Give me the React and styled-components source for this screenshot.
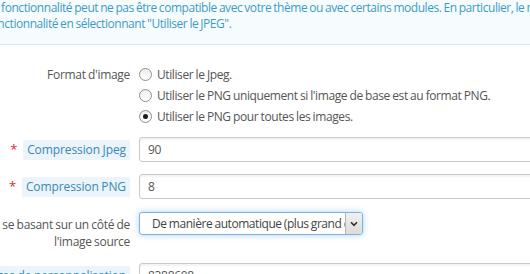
import React from "react";
import styled, { createGlobalStyle } from "styled-components";

const Global = createGlobalStyle`
  html, body { margin: 0; padding: 0; background: #fff; overflow: hidden; }
  body {
    font-family: "Open Sans", "DejaVu Sans", sans-serif;
    font-size: 12px;
    color: #555;
    letter-spacing: -0.3px;
    word-spacing: -0.4px;
  }
`;

const Page = styled.div`
  width: 1100px;
  margin: -10px 0 0 -140px;
`;

const Alert = styled.div`
  background: #f6fbfd;
  border-bottom: 1px solid #d5e6ee;
  color: #3d9cc6;
  padding: 10px 20px 12px 127px;
  line-height: 16px;
  white-space: nowrap;
  margin-bottom: 19px;
  letter-spacing: -0.45px;
  word-spacing: -0.6px;
`;

const Form = styled.div``;

const FormGroup = styled.div`
  display: grid;
  grid-template-columns: 270px 1fr;
  column-gap: 9px;
  align-items: ${(p) => (p.$top ? "start" : "center")};
  margin-bottom: ${(p) => p.$spacing ?? 12}px;
`;

const Label = styled.div`
  text-align: right;
  line-height: ${(p) => p.$lh ?? 17}px;
  padding-top: ${(p) => p.$pt ?? 0}px;
  color: #555;
  white-space: nowrap;
`;

const Required = styled.span`
  color: #e3262a;
  margin-right: 6px;
  font-size: 13px;
`;

const Tip = styled.span`
  display: inline-block;
  background: #eaf4fa;
  color: #3889b3;
  padding: 0 4px;
  line-height: 20px;
  border-radius: 2px;
  letter-spacing: -0.1px;
`;

const RadioList = styled.div`
  display: flex;
  flex-direction: column;
`;

const RadioRow = styled.div`
  display: flex;
  align-items: center;
  height: 21px;
  gap: 5px;
  color: #555;
  letter-spacing: -0.4px;
`;

const RadioCircle = styled.span`
  width: 11px;
  height: 11px;
  flex: none;
  border-radius: 50%;
  border: 1px solid #8f8f8f;
  background: linear-gradient(#ececec, #fff);
  display: flex;
  align-items: center;
  justify-content: center;
  &::after {
    content: "";
    width: 5px;
    height: 5px;
    border-radius: 50%;
    background: #1c1c1c;
    display: ${(p) => (p.$checked ? "block" : "none")};
  }
`;

const Input = styled.div`
  height: 23px;
  border: 1px solid #c9c9c9;
  border-radius: 3px;
  background: #fff;
  box-shadow: inset 0 2px 2px rgba(0, 0, 0, 0.05);
  padding-left: 8px;
  line-height: 23px;
  color: #555;
`;

const Select = styled.div`
  width: 222px;
  height: 21px;
  border: 1px solid #7fb2dc;
  border-radius: 3px;
  box-shadow: 0 0 6px rgba(102, 175, 233, 0.55);
  display: flex;
  background: #fff;
  overflow: hidden;
`;

const SelectText = styled.div`
  flex: 1;
  padding-left: 12px;
  line-height: 21px;
  white-space: nowrap;
  overflow: hidden;
  color: #444;
  letter-spacing: -0.45px;
`;

const SelectArrow = styled.div`
  width: 16px;
  border-left: 1px solid #b5b5b5;
  background: linear-gradient(#f0f0f0, #dcdcdc);
  display: flex;
  align-items: center;
  justify-content: center;
`;

const radios = [
  { text: "Utiliser le Jpeg.", checked: false },
  { text: "Utiliser le PNG uniquement si l'image de base est au format PNG.", checked: false },
  { text: "Utiliser le PNG pour toutes les images.", checked: true },
];

export default function App() {
  return (
    <>
      <Global />
      <Page>
        <Alert>
          La fonctionnalité peut ne pas être compatible avec votre thème ou avec certains modules. En particulier, le mode PNG n'est pas compatible avec le module Filigrane. Si vous rencontrez des problèmes, désactivez cette
          <br />
          fonctionnalité en sélectionnant "Utiliser le JPEG".
        </Alert>
        <Form>
          <FormGroup $top $spacing={10}>
            <Label $lh={21}>Format d'image</Label>
            <RadioList>
              {radios.map((r) => (
                <RadioRow key={r.text}>
                  <RadioCircle $checked={r.checked} />
                  {r.text}
                </RadioRow>
              ))}
            </RadioList>
          </FormGroup>
          <FormGroup>
            <Label>
              <Required>*</Required>
              <Tip>Compression Jpeg</Tip>
            </Label>
            <Input>90</Input>
          </FormGroup>
          <FormGroup $spacing={13}>
            <Label>
              <Required>*</Required>
              <Tip>Compression PNG</Tip>
            </Label>
            <Input>8</Input>
          </FormGroup>
          <FormGroup $top $spacing={13}>
            <Label $pt={4}>
              Générer les images en se basant sur un côté de
              <br />
              l'image source
            </Label>
            <Select>
              <SelectText>De manière automatique (plus grand côté)</SelectText>
              <SelectArrow>
                <svg width="8" height="6" viewBox="0 0 8 6">
                  <path d="M1 1.2 L4 4.4 L7 1.2" fill="none" stroke="#333" strokeWidth="1.6" />
                </svg>
              </SelectArrow>
            </Select>
          </FormGroup>
          <FormGroup>
            <Label>
              <Tip>Taille maximale des images de personnalisation</Tip>
            </Label>
            <Input>8388608</Input>
          </FormGroup>
        </Form>
      </Page>
    </>
  );
}
